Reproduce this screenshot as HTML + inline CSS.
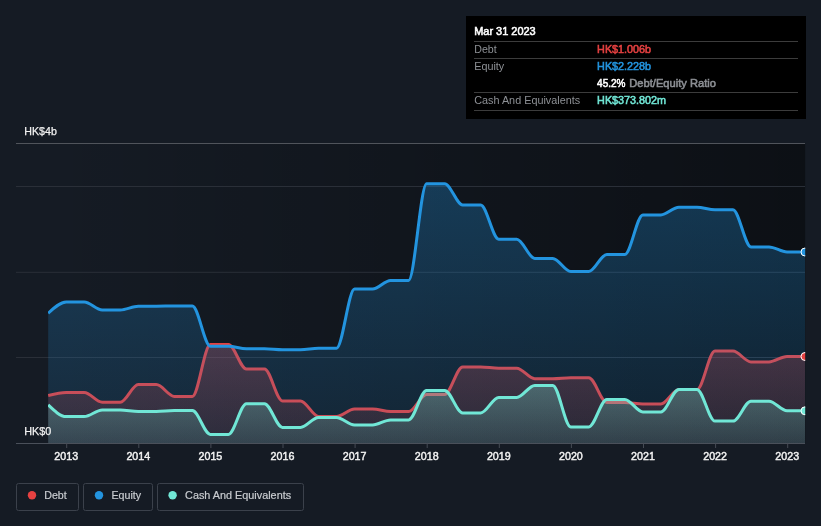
<!DOCTYPE html>
<html><head><meta charset="utf-8"><title>Debt Equity History</title>
<style>
html,body{margin:0;padding:0;background:#151b24;}
body{width:821px;height:526px;overflow:hidden;font-family:"Liberation Sans",Arial,sans-serif;}
svg{display:block;will-change:transform;}
text{font-family:"Liberation Sans",Arial,sans-serif;}
</style></head><body>
<svg width="821" height="526" viewBox="0 0 821 526">
<defs>
<linearGradient id="gbg" x1="0" y1="0" x2="1" y2="0">
<stop offset="0" stop-color="#000" stop-opacity="0"/>
<stop offset="1" stop-color="#000" stop-opacity="0.42"/>
</linearGradient>
<linearGradient id="gblue" gradientUnits="userSpaceOnUse" x1="0" y1="183" x2="0" y2="443.5">
<stop offset="0" stop-color="#2394df" stop-opacity="0.30"/>
<stop offset="1" stop-color="#2394df" stop-opacity="0.12"/>
</linearGradient>
<linearGradient id="gred" gradientUnits="userSpaceOnUse" x1="0" y1="344" x2="0" y2="443.5">
<stop offset="0" stop-color="#e64141" stop-opacity="0.30"/>
<stop offset="1" stop-color="#e64141" stop-opacity="0.12"/>
</linearGradient>
<linearGradient id="gcash" gradientUnits="userSpaceOnUse" x1="0" y1="385" x2="0" y2="443.5">
<stop offset="0" stop-color="#71e7d6" stop-opacity="0.30"/>
<stop offset="1" stop-color="#71e7d6" stop-opacity="0.13"/>
</linearGradient>
<clipPath id="clip"><rect x="48" y="120" width="757.2" height="330"/></clipPath>
</defs>
<rect x="0" y="0" width="821" height="526" fill="#151b24"/>
<rect x="48.2" y="144" width="757" height="299.5" fill="url(#gbg)"/>
<!-- grid -->
<g stroke="#2a2f38" stroke-width="1">
<line x1="16" y1="186.5" x2="805" y2="186.5"/>
<line x1="16" y1="272.3" x2="805" y2="272.3"/>
<line x1="16" y1="357.5" x2="805" y2="357.5"/>
</g>
<line x1="16" y1="143.5" x2="805" y2="143.5" stroke="#50545b" stroke-width="1"/>
<g clip-path="url(#clip)">
<path d="M48.20,395.60C54.21,394.10,60.21,392.60,66.22,392.60C72.23,392.60,78.23,392.60,84.24,392.60C90.25,392.60,96.25,402.30,102.26,402.30C108.27,402.30,114.27,402.30,120.28,402.30C126.29,402.30,132.29,384.60,138.30,384.60C144.31,384.60,150.31,384.60,156.32,384.60C162.33,384.60,168.33,396.40,174.34,396.40C180.35,396.40,186.35,396.40,192.36,396.40C198.37,396.40,204.37,344.50,210.38,344.50C216.39,344.50,222.39,344.50,228.40,344.50C234.41,344.50,240.41,369.00,246.42,369.00C252.43,369.00,258.43,369.00,264.44,369.00C270.45,369.00,276.45,400.90,282.46,400.90C288.47,400.90,294.47,400.90,300.48,400.90C306.49,400.90,312.49,416.40,318.50,416.40C324.51,416.40,330.51,416.40,336.52,416.40C342.53,416.40,348.53,409.00,354.54,409.00C360.55,409.00,366.55,409.00,372.56,409.00C378.57,409.00,384.57,411.60,390.58,411.60C396.59,411.60,402.59,411.60,408.60,411.60C414.61,411.60,420.61,394.40,426.62,394.40C432.63,394.40,438.63,394.40,444.64,394.40C450.65,394.40,456.65,367.00,462.66,367.00C468.67,367.00,474.67,367.00,480.68,367.00C486.69,367.00,492.69,368.20,498.70,368.20C504.71,368.20,510.71,368.20,516.72,368.20C522.73,368.20,528.73,378.70,534.74,378.70C540.75,378.70,546.75,378.70,552.76,378.70C558.77,378.70,564.77,377.70,570.78,377.70C576.79,377.70,582.79,377.70,588.80,377.70C594.81,377.70,600.81,402.40,606.82,402.40C612.83,402.40,618.83,402.40,624.84,402.40C630.85,402.40,636.85,403.90,642.86,403.90C648.87,403.90,654.87,403.90,660.88,403.90C666.89,403.90,672.89,389.60,678.90,389.60C684.91,389.60,690.91,389.60,696.92,389.60C702.93,389.60,708.93,351.10,714.94,351.10C720.95,351.10,726.95,351.10,732.96,351.10C738.97,351.10,744.97,361.90,750.98,361.90C756.99,361.90,762.99,361.90,769.00,361.90C775.01,361.90,781.01,356.50,787.02,356.50C793.03,356.50,799.03,356.50,805.04,356.50L805.04,443.50L48.20,443.50Z" fill="url(#gred)"/>
<path d="M48.20,395.60C54.21,394.10,60.21,392.60,66.22,392.60C72.23,392.60,78.23,392.60,84.24,392.60C90.25,392.60,96.25,402.30,102.26,402.30C108.27,402.30,114.27,402.30,120.28,402.30C126.29,402.30,132.29,384.60,138.30,384.60C144.31,384.60,150.31,384.60,156.32,384.60C162.33,384.60,168.33,396.40,174.34,396.40C180.35,396.40,186.35,396.40,192.36,396.40C198.37,396.40,204.37,344.50,210.38,344.50C216.39,344.50,222.39,344.50,228.40,344.50C234.41,344.50,240.41,369.00,246.42,369.00C252.43,369.00,258.43,369.00,264.44,369.00C270.45,369.00,276.45,400.90,282.46,400.90C288.47,400.90,294.47,400.90,300.48,400.90C306.49,400.90,312.49,416.40,318.50,416.40C324.51,416.40,330.51,416.40,336.52,416.40C342.53,416.40,348.53,409.00,354.54,409.00C360.55,409.00,366.55,409.00,372.56,409.00C378.57,409.00,384.57,411.60,390.58,411.60C396.59,411.60,402.59,411.60,408.60,411.60C414.61,411.60,420.61,394.40,426.62,394.40C432.63,394.40,438.63,394.40,444.64,394.40C450.65,394.40,456.65,367.00,462.66,367.00C468.67,367.00,474.67,367.00,480.68,367.00C486.69,367.00,492.69,368.20,498.70,368.20C504.71,368.20,510.71,368.20,516.72,368.20C522.73,368.20,528.73,378.70,534.74,378.70C540.75,378.70,546.75,378.70,552.76,378.70C558.77,378.70,564.77,377.70,570.78,377.70C576.79,377.70,582.79,377.70,588.80,377.70C594.81,377.70,600.81,402.40,606.82,402.40C612.83,402.40,618.83,402.40,624.84,402.40C630.85,402.40,636.85,403.90,642.86,403.90C648.87,403.90,654.87,403.90,660.88,403.90C666.89,403.90,672.89,389.60,678.90,389.60C684.91,389.60,690.91,389.60,696.92,389.60C702.93,389.60,708.93,351.10,714.94,351.10C720.95,351.10,726.95,351.10,732.96,351.10C738.97,351.10,744.97,361.90,750.98,361.90C756.99,361.90,762.99,361.90,769.00,361.90C775.01,361.90,781.01,356.50,787.02,356.50C793.03,356.50,799.03,356.50,805.04,356.50" fill="none" stroke="#e64141" stroke-width="3" stroke-linejoin="round"/>
<path d="M48.20,313.30C54.21,307.65,60.21,302.00,66.22,302.00C72.23,302.00,78.23,302.00,84.24,302.00C90.25,302.00,96.25,310.00,102.26,310.00C108.27,310.00,114.27,310.00,120.28,310.00C126.29,310.00,132.29,306.20,138.30,306.20C144.31,306.20,150.31,306.20,156.32,306.20C162.33,306.20,168.33,306.00,174.34,306.00C180.35,306.00,186.35,306.00,192.36,306.00C198.37,306.00,204.37,346.20,210.38,346.20C216.39,346.20,222.39,346.20,228.40,346.20C234.41,346.20,240.41,348.70,246.42,348.70C252.43,348.70,258.43,348.70,264.44,348.70C270.45,348.70,276.45,349.70,282.46,349.70C288.47,349.70,294.47,349.70,300.48,349.70C306.49,349.70,312.49,348.20,318.50,348.20C324.51,348.20,330.51,348.20,336.52,348.20C342.53,348.20,348.53,289.10,354.54,289.10C360.55,289.10,366.55,289.10,372.56,289.10C378.57,289.10,384.57,280.40,390.58,280.40C396.59,280.40,402.59,280.40,408.60,280.40C414.61,280.40,420.61,183.70,426.62,183.70C432.63,183.70,438.63,183.70,444.64,183.70C450.65,183.70,456.65,205.00,462.66,205.00C468.67,205.00,474.67,205.00,480.68,205.00C486.69,205.00,492.69,239.20,498.70,239.20C504.71,239.20,510.71,239.20,516.72,239.20C522.73,239.20,528.73,258.40,534.74,258.40C540.75,258.40,546.75,258.40,552.76,258.40C558.77,258.40,564.77,271.40,570.78,271.40C576.79,271.40,582.79,271.40,588.80,271.40C594.81,271.40,600.81,254.40,606.82,254.40C612.83,254.40,618.83,254.40,624.84,254.40C630.85,254.40,636.85,214.90,642.86,214.90C648.87,214.90,654.87,214.90,660.88,214.90C666.89,214.90,672.89,207.20,678.90,207.20C684.91,207.20,690.91,207.20,696.92,207.20C702.93,207.20,708.93,209.70,714.94,209.70C720.95,209.70,726.95,209.70,732.96,209.70C738.97,209.70,744.97,246.90,750.98,246.90C756.99,246.90,762.99,246.90,769.00,246.90C775.01,246.90,781.01,252.00,787.02,252.00C793.03,252.00,799.03,252.00,805.04,252.00L805.04,443.50L48.20,443.50Z" fill="url(#gblue)"/>
<path d="M48.20,313.30C54.21,307.65,60.21,302.00,66.22,302.00C72.23,302.00,78.23,302.00,84.24,302.00C90.25,302.00,96.25,310.00,102.26,310.00C108.27,310.00,114.27,310.00,120.28,310.00C126.29,310.00,132.29,306.20,138.30,306.20C144.31,306.20,150.31,306.20,156.32,306.20C162.33,306.20,168.33,306.00,174.34,306.00C180.35,306.00,186.35,306.00,192.36,306.00C198.37,306.00,204.37,346.20,210.38,346.20C216.39,346.20,222.39,346.20,228.40,346.20C234.41,346.20,240.41,348.70,246.42,348.70C252.43,348.70,258.43,348.70,264.44,348.70C270.45,348.70,276.45,349.70,282.46,349.70C288.47,349.70,294.47,349.70,300.48,349.70C306.49,349.70,312.49,348.20,318.50,348.20C324.51,348.20,330.51,348.20,336.52,348.20C342.53,348.20,348.53,289.10,354.54,289.10C360.55,289.10,366.55,289.10,372.56,289.10C378.57,289.10,384.57,280.40,390.58,280.40C396.59,280.40,402.59,280.40,408.60,280.40C414.61,280.40,420.61,183.70,426.62,183.70C432.63,183.70,438.63,183.70,444.64,183.70C450.65,183.70,456.65,205.00,462.66,205.00C468.67,205.00,474.67,205.00,480.68,205.00C486.69,205.00,492.69,239.20,498.70,239.20C504.71,239.20,510.71,239.20,516.72,239.20C522.73,239.20,528.73,258.40,534.74,258.40C540.75,258.40,546.75,258.40,552.76,258.40C558.77,258.40,564.77,271.40,570.78,271.40C576.79,271.40,582.79,271.40,588.80,271.40C594.81,271.40,600.81,254.40,606.82,254.40C612.83,254.40,618.83,254.40,624.84,254.40C630.85,254.40,636.85,214.90,642.86,214.90C648.87,214.90,654.87,214.90,660.88,214.90C666.89,214.90,672.89,207.20,678.90,207.20C684.91,207.20,690.91,207.20,696.92,207.20C702.93,207.20,708.93,209.70,714.94,209.70C720.95,209.70,726.95,209.70,732.96,209.70C738.97,209.70,744.97,246.90,750.98,246.90C756.99,246.90,762.99,246.90,769.00,246.90C775.01,246.90,781.01,252.00,787.02,252.00C793.03,252.00,799.03,252.00,805.04,252.00" fill="none" stroke="#2394df" stroke-width="3" stroke-linejoin="round"/>
<path d="M48.20,404.90C54.21,410.75,60.21,416.60,66.22,416.60C72.23,416.60,78.23,416.60,84.24,416.60C90.25,416.60,96.25,409.90,102.26,409.90C108.27,409.90,114.27,409.90,120.28,409.90C126.29,409.90,132.29,411.40,138.30,411.40C144.31,411.40,150.31,411.40,156.32,411.40C162.33,411.40,168.33,410.60,174.34,410.60C180.35,410.60,186.35,410.60,192.36,410.60C198.37,410.60,204.37,434.40,210.38,434.40C216.39,434.40,222.39,434.40,228.40,434.40C234.41,434.40,240.41,403.70,246.42,403.70C252.43,403.70,258.43,403.70,264.44,403.70C270.45,403.70,276.45,427.40,282.46,427.40C288.47,427.40,294.47,427.40,300.48,427.40C306.49,427.40,312.49,417.40,318.50,417.40C324.51,417.40,330.51,417.40,336.52,417.40C342.53,417.40,348.53,424.90,354.54,424.90C360.55,424.90,366.55,424.90,372.56,424.90C378.57,424.90,384.57,419.90,390.58,419.90C396.59,419.90,402.59,419.90,408.60,419.90C414.61,419.90,420.61,390.40,426.62,390.40C432.63,390.40,438.63,390.40,444.64,390.40C450.65,390.40,456.65,412.90,462.66,412.90C468.67,412.90,474.67,412.90,480.68,412.90C486.69,412.90,492.69,397.40,498.70,397.40C504.71,397.40,510.71,397.40,516.72,397.40C522.73,397.40,528.73,385.40,534.74,385.40C540.75,385.40,546.75,385.40,552.76,385.40C558.77,385.40,564.77,426.90,570.78,426.90C576.79,426.90,582.79,426.90,588.80,426.90C594.81,426.90,600.81,399.40,606.82,399.40C612.83,399.40,618.83,399.40,624.84,399.40C630.85,399.40,636.85,411.90,642.86,411.90C648.87,411.90,654.87,411.90,660.88,411.90C666.89,411.90,672.89,389.40,678.90,389.40C684.91,389.40,690.91,389.40,696.92,389.40C702.93,389.40,708.93,421.10,714.94,421.10C720.95,421.10,726.95,421.10,732.96,421.10C738.97,421.10,744.97,401.20,750.98,401.20C756.99,401.20,762.99,401.20,769.00,401.20C775.01,401.20,781.01,410.80,787.02,410.80C793.03,410.80,799.03,410.80,805.04,410.80L805.04,443.50L48.20,443.50Z" fill="url(#gcash)"/>
<path d="M48.20,404.90C54.21,410.75,60.21,416.60,66.22,416.60C72.23,416.60,78.23,416.60,84.24,416.60C90.25,416.60,96.25,409.90,102.26,409.90C108.27,409.90,114.27,409.90,120.28,409.90C126.29,409.90,132.29,411.40,138.30,411.40C144.31,411.40,150.31,411.40,156.32,411.40C162.33,411.40,168.33,410.60,174.34,410.60C180.35,410.60,186.35,410.60,192.36,410.60C198.37,410.60,204.37,434.40,210.38,434.40C216.39,434.40,222.39,434.40,228.40,434.40C234.41,434.40,240.41,403.70,246.42,403.70C252.43,403.70,258.43,403.70,264.44,403.70C270.45,403.70,276.45,427.40,282.46,427.40C288.47,427.40,294.47,427.40,300.48,427.40C306.49,427.40,312.49,417.40,318.50,417.40C324.51,417.40,330.51,417.40,336.52,417.40C342.53,417.40,348.53,424.90,354.54,424.90C360.55,424.90,366.55,424.90,372.56,424.90C378.57,424.90,384.57,419.90,390.58,419.90C396.59,419.90,402.59,419.90,408.60,419.90C414.61,419.90,420.61,390.40,426.62,390.40C432.63,390.40,438.63,390.40,444.64,390.40C450.65,390.40,456.65,412.90,462.66,412.90C468.67,412.90,474.67,412.90,480.68,412.90C486.69,412.90,492.69,397.40,498.70,397.40C504.71,397.40,510.71,397.40,516.72,397.40C522.73,397.40,528.73,385.40,534.74,385.40C540.75,385.40,546.75,385.40,552.76,385.40C558.77,385.40,564.77,426.90,570.78,426.90C576.79,426.90,582.79,426.90,588.80,426.90C594.81,426.90,600.81,399.40,606.82,399.40C612.83,399.40,618.83,399.40,624.84,399.40C630.85,399.40,636.85,411.90,642.86,411.90C648.87,411.90,654.87,411.90,660.88,411.90C666.89,411.90,672.89,389.40,678.90,389.40C684.91,389.40,690.91,389.40,696.92,389.40C702.93,389.40,708.93,421.10,714.94,421.10C720.95,421.10,726.95,421.10,732.96,421.10C738.97,421.10,744.97,401.20,750.98,401.20C756.99,401.20,762.99,401.20,769.00,401.20C775.01,401.20,781.01,410.80,787.02,410.80C793.03,410.80,799.03,410.80,805.04,410.80" fill="none" stroke="#71e7d6" stroke-width="3" stroke-linejoin="round"/>
<circle cx="805" cy="252" r="4" fill="#2394df" stroke="#fff" stroke-width="1"/>
<circle cx="805" cy="356.5" r="4" fill="#e64141" stroke="#fff" stroke-width="1"/>
<circle cx="805" cy="410.8" r="4" fill="#71e7d6" stroke="#fff" stroke-width="1"/>
</g>
<line x1="16" y1="443.5" x2="805" y2="443.5" stroke="#4a505a" stroke-width="1"/>
<line x1="66.7" y1="443.5" x2="66.7" y2="448" stroke="#454b54" stroke-width="1"/><text x="66.2" y="460.1" font-size="11" fill="#f2f2f2" text-anchor="middle" stroke="#f2f2f2" stroke-width="0.45" textLength="23.8" lengthAdjust="spacingAndGlyphs">2013</text><line x1="138.8" y1="443.5" x2="138.8" y2="448" stroke="#454b54" stroke-width="1"/><text x="138.3" y="460.1" font-size="11" fill="#f2f2f2" text-anchor="middle" stroke="#f2f2f2" stroke-width="0.45" textLength="23.8" lengthAdjust="spacingAndGlyphs">2014</text><line x1="210.9" y1="443.5" x2="210.9" y2="448" stroke="#454b54" stroke-width="1"/><text x="210.4" y="460.1" font-size="11" fill="#f2f2f2" text-anchor="middle" stroke="#f2f2f2" stroke-width="0.45" textLength="23.8" lengthAdjust="spacingAndGlyphs">2015</text><line x1="283.0" y1="443.5" x2="283.0" y2="448" stroke="#454b54" stroke-width="1"/><text x="282.5" y="460.1" font-size="11" fill="#f2f2f2" text-anchor="middle" stroke="#f2f2f2" stroke-width="0.45" textLength="23.8" lengthAdjust="spacingAndGlyphs">2016</text><line x1="355.1" y1="443.5" x2="355.1" y2="448" stroke="#454b54" stroke-width="1"/><text x="354.6" y="460.1" font-size="11" fill="#f2f2f2" text-anchor="middle" stroke="#f2f2f2" stroke-width="0.45" textLength="23.8" lengthAdjust="spacingAndGlyphs">2017</text><line x1="427.2" y1="443.5" x2="427.2" y2="448" stroke="#454b54" stroke-width="1"/><text x="426.7" y="460.1" font-size="11" fill="#f2f2f2" text-anchor="middle" stroke="#f2f2f2" stroke-width="0.45" textLength="23.8" lengthAdjust="spacingAndGlyphs">2018</text><line x1="499.3" y1="443.5" x2="499.3" y2="448" stroke="#454b54" stroke-width="1"/><text x="498.8" y="460.1" font-size="11" fill="#f2f2f2" text-anchor="middle" stroke="#f2f2f2" stroke-width="0.45" textLength="23.8" lengthAdjust="spacingAndGlyphs">2019</text><line x1="571.4" y1="443.5" x2="571.4" y2="448" stroke="#454b54" stroke-width="1"/><text x="570.9" y="460.1" font-size="11" fill="#f2f2f2" text-anchor="middle" stroke="#f2f2f2" stroke-width="0.45" textLength="23.8" lengthAdjust="spacingAndGlyphs">2020</text><line x1="643.5" y1="443.5" x2="643.5" y2="448" stroke="#454b54" stroke-width="1"/><text x="643.0" y="460.1" font-size="11" fill="#f2f2f2" text-anchor="middle" stroke="#f2f2f2" stroke-width="0.45" textLength="23.8" lengthAdjust="spacingAndGlyphs">2021</text><line x1="715.6" y1="443.5" x2="715.6" y2="448" stroke="#454b54" stroke-width="1"/><text x="715.1" y="460.1" font-size="11" fill="#f2f2f2" text-anchor="middle" stroke="#f2f2f2" stroke-width="0.45" textLength="23.8" lengthAdjust="spacingAndGlyphs">2022</text><line x1="787.7" y1="443.5" x2="787.7" y2="448" stroke="#454b54" stroke-width="1"/><text x="787.2" y="460.1" font-size="11" fill="#f2f2f2" text-anchor="middle" stroke="#f2f2f2" stroke-width="0.45" textLength="23.8" lengthAdjust="spacingAndGlyphs">2023</text>
<text x="24.3" y="135.3" font-size="11" fill="#f2f2f2" stroke="#f2f2f2" stroke-width="0.25" textLength="32.5" lengthAdjust="spacingAndGlyphs">HK$4b</text>
<text x="24.3" y="435.3" font-size="11" fill="#f2f2f2" stroke="#f2f2f2" stroke-width="0.25" textLength="27.0" lengthAdjust="spacingAndGlyphs">HK$0</text>
<!-- tooltip -->
<rect x="466" y="16" width="340" height="103" fill="#000"/>
<g stroke="#3c3c3c" stroke-width="1">
<line x1="474" y1="41.5" x2="798" y2="41.5"/>
<line x1="474" y1="58.5" x2="798" y2="58.5"/>
<line x1="474" y1="92.5" x2="798" y2="92.5"/>
<line x1="474" y1="110.5" x2="798" y2="110.5"/>
</g>
<text x="474.2" y="35.0" font-size="11" fill="#fff" stroke="#fff" stroke-width="0.55" textLength="61.5" lengthAdjust="spacingAndGlyphs">Mar 31 2023</text>
<text x="474.2" y="53.0" font-size="11" fill="#8d9095" textLength="22.5" lengthAdjust="spacingAndGlyphs">Debt</text>
<text x="597.1" y="53.0" font-size="11" fill="#e64141" stroke="#e64141" stroke-width="0.55" textLength="54.0" lengthAdjust="spacingAndGlyphs">HK$1.006b</text>
<text x="474.2" y="70.0" font-size="11" fill="#8d9095" textLength="30.0" lengthAdjust="spacingAndGlyphs">Equity</text>
<text x="597.1" y="70.0" font-size="11" fill="#2394df" stroke="#2394df" stroke-width="0.55" textLength="54.0" lengthAdjust="spacingAndGlyphs">HK$2.228b</text>
<text x="597.1" y="87.0" font-size="11" fill="#fff" stroke="#fff" stroke-width="0.55" textLength="28.4" lengthAdjust="spacingAndGlyphs">45.2%</text>
<text x="629.3" y="87.0" font-size="11" fill="#8d9095" stroke="#8d9095" stroke-width="0.55" textLength="86.6" lengthAdjust="spacingAndGlyphs">Debt/Equity Ratio</text>
<text x="474.2" y="104.0" font-size="11" fill="#8d9095" textLength="106.0" lengthAdjust="spacingAndGlyphs">Cash And Equivalents</text>
<text x="597.1" y="104.0" font-size="11" fill="#71e7d6" stroke="#71e7d6" stroke-width="0.55" textLength="69.0" lengthAdjust="spacingAndGlyphs">HK$373.802m</text>
<!-- legend -->
<g fill="none" stroke="#3b414b" stroke-width="1">
<rect x="16.5" y="483.5" width="62" height="27" rx="2"/>
<rect x="83.5" y="483.5" width="69" height="27" rx="2"/>
<rect x="157.5" y="483.5" width="146" height="27" rx="2"/>
</g>
<circle cx="32" cy="495.3" r="4.2" fill="#e64141"/>
<circle cx="99" cy="495.3" r="4.2" fill="#2394df"/>
<circle cx="172.6" cy="495.3" r="4.2" fill="#71e7d6"/>
<text x="44.2" y="499.4" font-size="11" fill="#c9ccd0" stroke="#c9ccd0" stroke-width="0.2" textLength="22.5" lengthAdjust="spacingAndGlyphs">Debt</text>
<text x="111.5" y="499.4" font-size="11" fill="#c9ccd0" stroke="#c9ccd0" stroke-width="0.2" textLength="29.6" lengthAdjust="spacingAndGlyphs">Equity</text>
<text x="185.1" y="499.4" font-size="11" fill="#c9ccd0" stroke="#c9ccd0" stroke-width="0.2" textLength="106.0" lengthAdjust="spacingAndGlyphs">Cash And Equivalents</text>
</svg>
</body></html>
